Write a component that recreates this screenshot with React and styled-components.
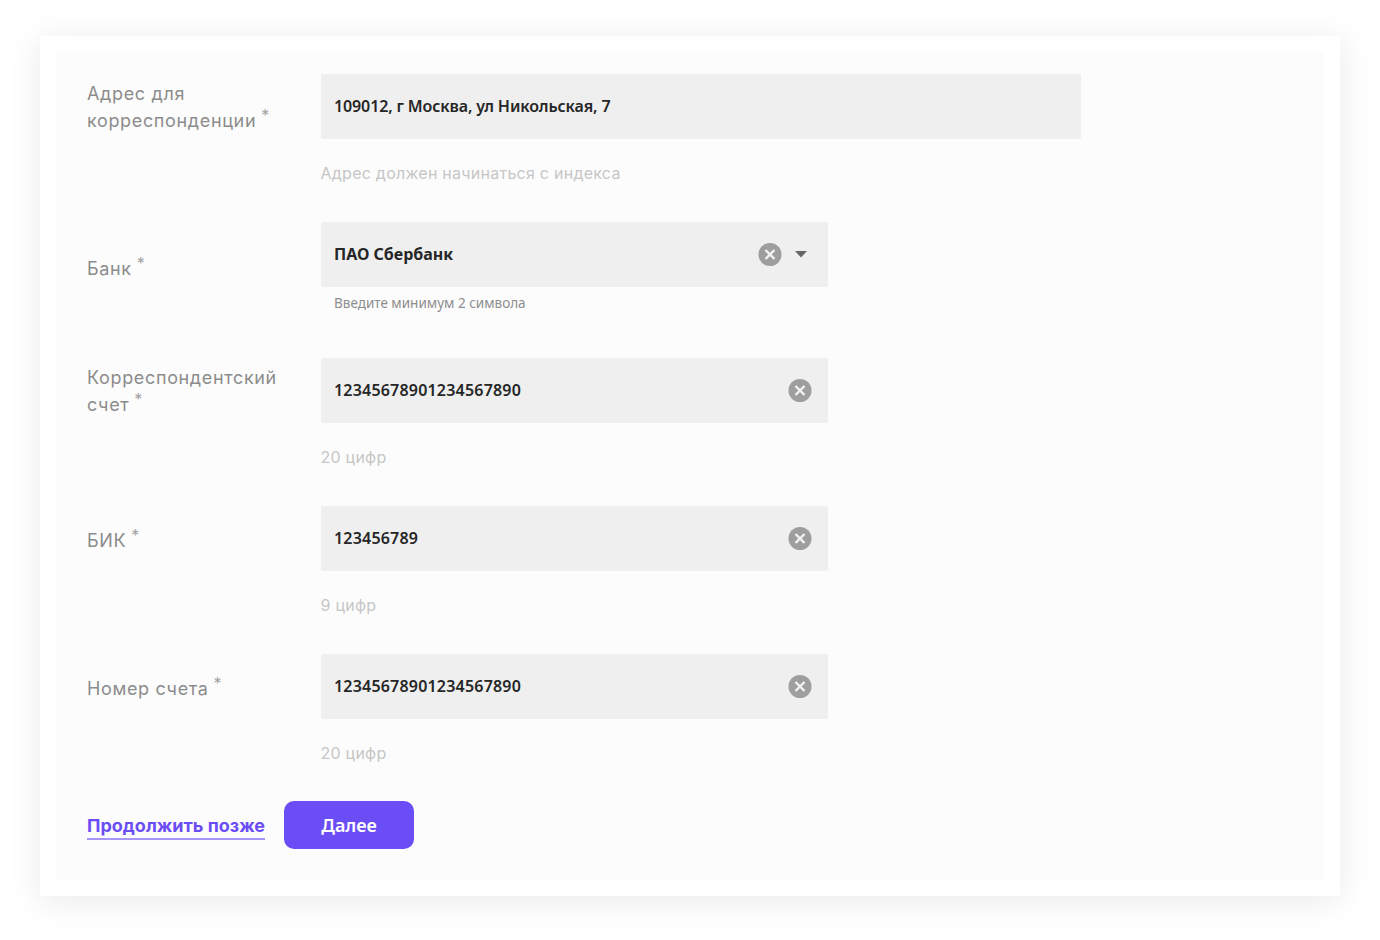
import React from 'react'
import styled, { createGlobalStyle } from 'styled-components'

const GlobalStyle = createGlobalStyle`
    html, body {
        margin: 0;
        padding: 0;
        background: #fff;
    }
`

const Page = styled.div`
    width: 1380px;
    height: 940px;
    padding: 36px 40px 44px;
    box-sizing: border-box;
`

const Card = styled.div`
    height: 860px;
    padding: 16px;
    box-sizing: border-box;
    background: #fff;
    box-shadow: 0 4px 32px rgba(0, 0, 0, 0.09);
`

const Inner = styled.form`
    height: 100%;
    padding: 22px 31px 0;
    box-sizing: border-box;
    background: #fcfcfc;
    display: flex;
    flex-direction: column;
    gap: 37px;
`

const Row = styled.div`
    display: grid;
    grid-template-columns: 233.5px 1fr;
`

const Label = styled.label`
    padding-top: ${(p) => p.$top}px;
    font-family: Inter, 'Noto Sans', sans-serif;
    font-size: 18px;
    line-height: 26.5px;
    letter-spacing: 0.65px;
    color: #8c8c8c;
`

const Required = styled.span`
    margin-left: 5px;
    font-size: 16px;
    line-height: 0;
    vertical-align: 6px;
    color: #a2a2a2;
`

const Field = styled.div`
    width: ${(p) => (p.$wide ? 760 : 507)}px;
    height: 65px;
    padding: 0 ${(p) => (p.$select ? 21 : 16)}px 0 13.5px;
    box-sizing: border-box;
    display: flex;
    align-items: center;
    gap: 13px;
    background: #efefef;
    border-radius: 2px;
`

const Value = styled.span`
    flex: 1;
    padding-bottom: 2px;
    font-family: 'Noto Sans', sans-serif;
    font-size: 16px;
    font-weight: ${(p) => (p.$bold ? 700 : 600)};
    letter-spacing: ${(p) => p.$spacing || 0}px;
    color: #262626;
`

const Hint = styled.div`
    margin-top: 22px;
    font-family: Inter, 'Noto Sans', sans-serif;
    font-size: 16px;
    line-height: 24px;
    letter-spacing: 0.25px;
    color: #c6c6c6;
`

const SmallHint = styled.div`
    margin-top: 4px;
    padding: 0 0 6px 13.5px;
    font-family: 'Noto Sans', sans-serif;
    font-size: 13.5px;
    line-height: 24px;
    color: #8e8e8e;
`

const Actions = styled.div`
    margin-top: -1px;
    display: flex;
    align-items: center;
    gap: 19px;
`

const LaterLink = styled.a`
    margin-top: 2px;
    font-family: Inter, 'Noto Sans', sans-serif;
    font-size: 18px;
    font-weight: 700;
    line-height: 25px;
    color: #6a4df4;
    border-bottom: 2px solid #a995f8;
`

const NextButton = styled.button`
    width: 130px;
    height: 48px;
    padding-bottom: 2px;
    border: 0;
    border-radius: 10px;
    background: #6a4df4;
    font-family: 'Noto Sans', sans-serif;
    font-size: 18px;
    font-weight: 600;
    color: #fff;
`

const ClearIcon = () => (
    <svg width="24" height="24" viewBox="0 0 24 24">
        <circle cx="12" cy="11.5" r="11.5" fill="#9e9e9e" />
        <path d="M7.5 7l9 9M16.5 7l-9 9" stroke="#f2f2f2" strokeWidth="2.4" />
    </svg>
)

const CaretIcon = () => (
    <svg width="12" height="7" viewBox="0 0 12 7">
        <path d="M0 0h12L6 6.5z" fill="#666" />
    </svg>
)

const TextRow = ({ label, top, value, hint, wide, spacing }) => (
    <Row>
        <Label $top={top}>
            {label}
            <Required>*</Required>
        </Label>
        <div>
            <Field $wide={wide}>
                <Value $spacing={spacing}>{value}</Value>
                {!wide && <ClearIcon />}
            </Field>
            <Hint>{hint}</Hint>
        </div>
    </Row>
)

const App = () => {
    return (
        <Page>
            <GlobalStyle />
            <Card>
                <Inner>
                    <TextRow
                        wide
                        top={7}
                        spacing={-0.12}
                        label={<>Адрес для<br />корреспонденции</>}
                        value="109012, г Москва, ул Никольская, 7"
                        hint="Адрес должен начинаться с индекса"
                    />
                    <Row>
                        <Label $top={34}>
                            Банк
                            <Required>*</Required>
                        </Label>
                        <div>
                            <Field $select>
                                <Value $bold>ПАО Сбербанк</Value>
                                <ClearIcon />
                                <CaretIcon />
                            </Field>
                            <SmallHint>Введите минимум 2 символа</SmallHint>
                        </div>
                    </Row>
                    <TextRow
                        top={7}
                        spacing={0.2}
                        label={<>Корреспондентский<br />счет</>}
                        value="12345678901234567890"
                        hint="20 цифр"
                    />
                    <TextRow top={22} spacing={0.2} label="БИК" value="123456789" hint="9 цифр" />
                    <TextRow top={22} spacing={0.2} label="Номер счета" value="12345678901234567890" hint="20 цифр" />
                    <Actions>
                        <LaterLink>Продолжить позже</LaterLink>
                        <NextButton type="button">Далее</NextButton>
                    </Actions>
                </Inner>
            </Card>
        </Page>
    )
}

export default App
